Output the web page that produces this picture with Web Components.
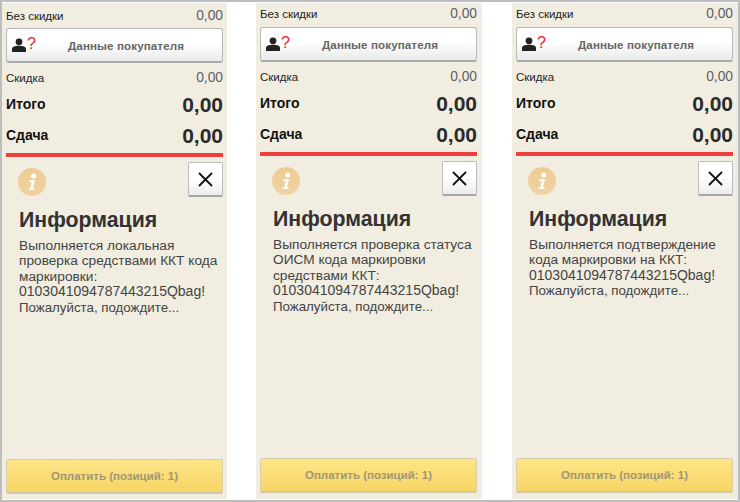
<!DOCTYPE html>
<html lang="ru"><head><meta charset="utf-8"><title>Касса</title>
<style>
html,body{margin:0;padding:0;background:#fff}
body{width:740px;height:502px;font-family:"Liberation Sans",Arial,sans-serif}
.code{font-size:14px}
.wait{font-size:13.300px}
</style></head><body>
<template id="t-frame"><style>
:host{display:flex;box-sizing:border-box;width:740px;height:502px;border:2px solid #bdbdbd;background:#fff;gap:29px;align-items:stretch;overflow:hidden}
::slotted(:last-child){margin-left:1px}
</style><slot></slot></template>

<template id="t-row"><style>
:host{display:flex;justify-content:space-between;align-items:center;color:#1e1e1e;font-size:11.500px;height:18px;line-height:18px}
:host([big]){font-weight:700;font-size:14px;color:#111;height:24px;line-height:24px}
.v{font-size:13.800px;color:#5b6068}
:host([big]) .v{font-size:21px;color:#2b2b2b;padding-top:2px}
:host([big]) .l{margin-top:-1px}
</style><span class="l"><slot></slot></span><span class="v"><slot name="v"></slot></span></template>

<template id="t-btn"><style>
:host{display:flex;align-items:center;box-sizing:border-box;height:35px;border:1px solid #b9b9b9;border-bottom:2px solid #a9a9a9;border-radius:3px;background:linear-gradient(#fff 45%,#e9e9e9);font-size:11.600px;font-weight:700;color:#666;letter-spacing:.1px}
svg{margin-left:5px;flex:none}
span{flex:1;text-align:center;margin-left:-5px;padding-top:1px}
i{font:400 16px "Liberation Sans",sans-serif;color:#f01c24;margin:-3px 0 0 1px;width:8px}
</style><svg width="14" height="14" viewBox="0 0 14 14"><circle cx="7" cy="3.800" r="3.400" fill="#222"/><path d="M0 14V11C0 8.900 2.800 7.800 7 7.800S14 8.900 14 11V14Z" fill="#222"/></svg><i>?</i><span><slot></slot></span></template>

<template id="t-close"><style>
:host{display:flex;align-items:center;justify-content:center;box-sizing:border-box;width:35px;height:35px;border:1px solid #bdbdbd;border-bottom:2px solid #a5a5a5;border-radius:2px;background:linear-gradient(#fff 50%,#ececec)}
</style><svg width="15" height="15" viewBox="0 0 15 15"><path d="M1 1L14 14M14 1L1 14" stroke="#111" stroke-width="1.800" fill="none"/></svg></template>

<template id="t-info"><style>
:host{display:block;width:28px;height:28px}
</style><svg width="28" height="28" viewBox="0 0 28 28"><defs><linearGradient id="g" x1="0" y1="0" x2="0" y2="1"><stop offset="0" stop-color="#eccb93"/><stop offset="1" stop-color="#f0d3a3"/></linearGradient></defs><circle cx="14" cy="14" r="14" fill="url(#g)"/><circle cx="15.600" cy="8" r="2.600" fill="#fff"/><path d="M11.300 12.300H17L14.900 20.400H16.600L16.200 22H10.400L10.800 20.400H12.100L13.500 14H11Z" fill="#fff"/></svg></template>

<template id="t-pay"><style>
:host{display:flex;align-items:center;justify-content:center;box-sizing:border-box;height:35px;border:1px solid #d6cfae;border-bottom:2px solid #cfc9ac;border-radius:2px;background:linear-gradient(#ffe587,#f6d566);font-size:11.500px;font-weight:700;color:#a09673}
</style><slot></slot></template>

<template id="t-panel"><style>
:host{display:flex;flex-direction:column;box-sizing:border-box;flex:none;width:226px;background:#f1ede1;margin:1px 0;padding:var(--top,3px) 5px 6px 4px}
:host([first]){width:225px;padding-right:4px;padding-bottom:5px}
h2{margin:10px 0 0 13px;font-size:21.300px;line-height:26px;font-weight:700;color:#333}
p{margin:5px 0 0 13px;font-size:13.700px;line-height:15.400px;color:#444}
.sp{flex:1}
</style>
<div><slot name="top"></slot></div>
<h2><slot name="title"></slot></h2>
<p><slot></slot></p>
<div class="sp"></div>
<slot name="pay"></slot></template>

<template id="t-summary"><style>
:host{display:flex;flex-direction:column}
.first{padding-top:var(--r1,0px);box-sizing:content-box}
cash-button{margin-top:calc(4px - var(--r1,0px))}
.a{margin-top:6px}.b{margin-top:5px}.c{margin-top:7px}
.rule{height:4px;background:#ee3e3e;margin-top:6px}
.head{display:flex;justify-content:space-between;align-items:flex-start;margin-top:5px}
.ic{margin:6px 0 0 12px}
</style>
<cash-row class="first">Без скидки<span slot="v">0,00</span></cash-row>
<cash-button>Данные покупателя</cash-button>
<cash-row class="a">Скидка<span slot="v">0,00</span></cash-row>
<cash-row class="b" big>Итого<span slot="v">0,00</span></cash-row>
<cash-row class="c" big>Сдача<span slot="v">0,00</span></cash-row>
<div class="rule"></div>
<div class="head"><cash-info class="ic"></cash-info><cash-close></cash-close></div></template>

<cash-frame>
<cash-panel first style="--top:3px;--r1:1px"><cash-summary slot="top"></cash-summary><span slot="title">Информация</span>Выполняется локальная<br>проверка средствами ККТ кода<br>маркировки:<br><span class="code">0103041094787443215Qbag!</span><br><span class="wait">Пожалуйста, подождите...</span><cash-pay slot="pay">Оплатить (позиций: 1)</cash-pay></cash-panel>
<cash-panel style="--top:2px"><cash-summary slot="top"></cash-summary><span slot="title">Информация</span>Выполняется проверка статуса<br>ОИСМ кода маркировки<br>средствами ККТ:<br><span class="code">0103041094787443215Qbag!</span><br><span class="wait">Пожалуйста, подождите...</span><cash-pay slot="pay">Оплатить (позиций: 1)</cash-pay></cash-panel>
<cash-panel style="--top:2px"><cash-summary slot="top"></cash-summary><span slot="title">Информация</span>Выполняется подтверждение<br>кода маркировки на ККТ:<br><span class="code">0103041094787443215Qbag!</span><br><span class="wait">Пожалуйста, подождите...</span><cash-pay slot="pay">Оплатить (позиций: 1)</cash-pay></cash-panel>
</cash-frame>
<script>
for (const [name, id] of [['cash-frame','t-frame'],['cash-row','t-row'],['cash-button','t-btn'],['cash-close','t-close'],['cash-info','t-info'],['cash-pay','t-pay'],['cash-panel','t-panel'],['cash-summary','t-summary']]) {
  customElements.define(name, class extends HTMLElement {
    constructor(){ super(); this.attachShadow({mode:'open'}).appendChild(document.getElementById(id).content.cloneNode(true)); }
  });
}
</script>
</body></html>
